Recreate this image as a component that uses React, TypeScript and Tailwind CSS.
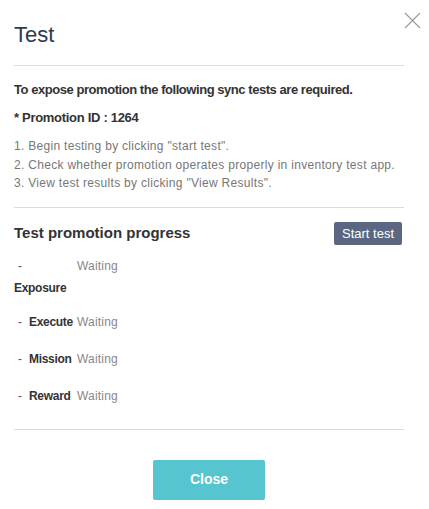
import React from "react";

function Row({ label }: { label: string }) {
  return (
    <div className="flex items-center h-[18px] text-[12px] leading-[18px]">
      <span className="w-[15px] pl-[4px] text-[#555]">-</span>
      <span className="w-[48px] font-bold text-[#333] tracking-[-0.3px]">{label}</span>
      <span className="text-[#888] tracking-[0.2px]">Waiting</span>
    </div>
  );
}

export default function App() {
  return (
    <div
      className="relative w-[429px] h-[509px] bg-white"
      style={{ fontFamily: '"Liberation Sans", Arial, sans-serif' }}
    >
      <button className="absolute left-[404px] top-[12px] w-[17px] h-[17px]" aria-label="close">
        <svg width="17" height="17" viewBox="0 0 17 17">
          <path d="M1 1 L16 16 M16 1 L1 16" stroke="#999" strokeWidth="1.1" fill="none" />
        </svg>
      </button>
      <div className="pl-[14px] pr-[25px] pt-[20px]">
        <h1 className="text-[22px] leading-[30px] text-[#2f3a4f] font-normal">Test</h1>
        <div className="mt-[15px] h-px bg-[#dddddd]" />
        <p className="mt-[15px] text-[13px] leading-[18px] font-bold text-[#333] tracking-[-0.45px]">
          To expose promotion the following sync tests are required.
        </p>
        <p className="mt-[10px] text-[13px] leading-[18px] font-bold text-[#333] tracking-[-0.3px]">* Promotion ID : 1264</p>
        <div className="mt-[10px] text-[12px] leading-[18.5px] text-[#777] tracking-[0.3px]">
          <p>1. Begin testing by clicking "start test".</p>
          <p>2. Check whether promotion operates properly in inventory test app.</p>
          <p>3. View test results by clicking "View Results".</p>
        </div>
        <div className="mt-[14px] h-px bg-[#dcd9e4]" />
        <div className="mt-[14px] flex items-center justify-between h-[23px]">
          <h2 className="text-[15px] font-bold text-[#333]">Test promotion progress</h2>
          <button className="mr-[2px] h-[23px] w-[68px] rounded-[2px] bg-[#5b6782] text-white text-[13px] leading-[23px]">
            Start test
          </button>
        </div>
        <div className="mt-[12px]">
          <Row label="" />
        </div>
        <p className="mt-[4px] text-[12px] leading-[18px] font-bold text-[#333] tracking-[-0.3px]">Exposure</p>
        <div className="mt-[16px] flex flex-col gap-[19px]">
          <Row label="Execute" />
          <Row label="Mission" />
          <Row label="Reward" />
        </div>
        <div className="mt-[24px] h-px bg-[#dcd9e4]" />
        <div className="mt-[30px] flex justify-center">
          <button className="w-[112px] h-[40px] rounded-[2px] bg-[#56c5d0] text-white text-[14px] font-bold">
            Close
          </button>
        </div>
      </div>
    </div>
  );
}
